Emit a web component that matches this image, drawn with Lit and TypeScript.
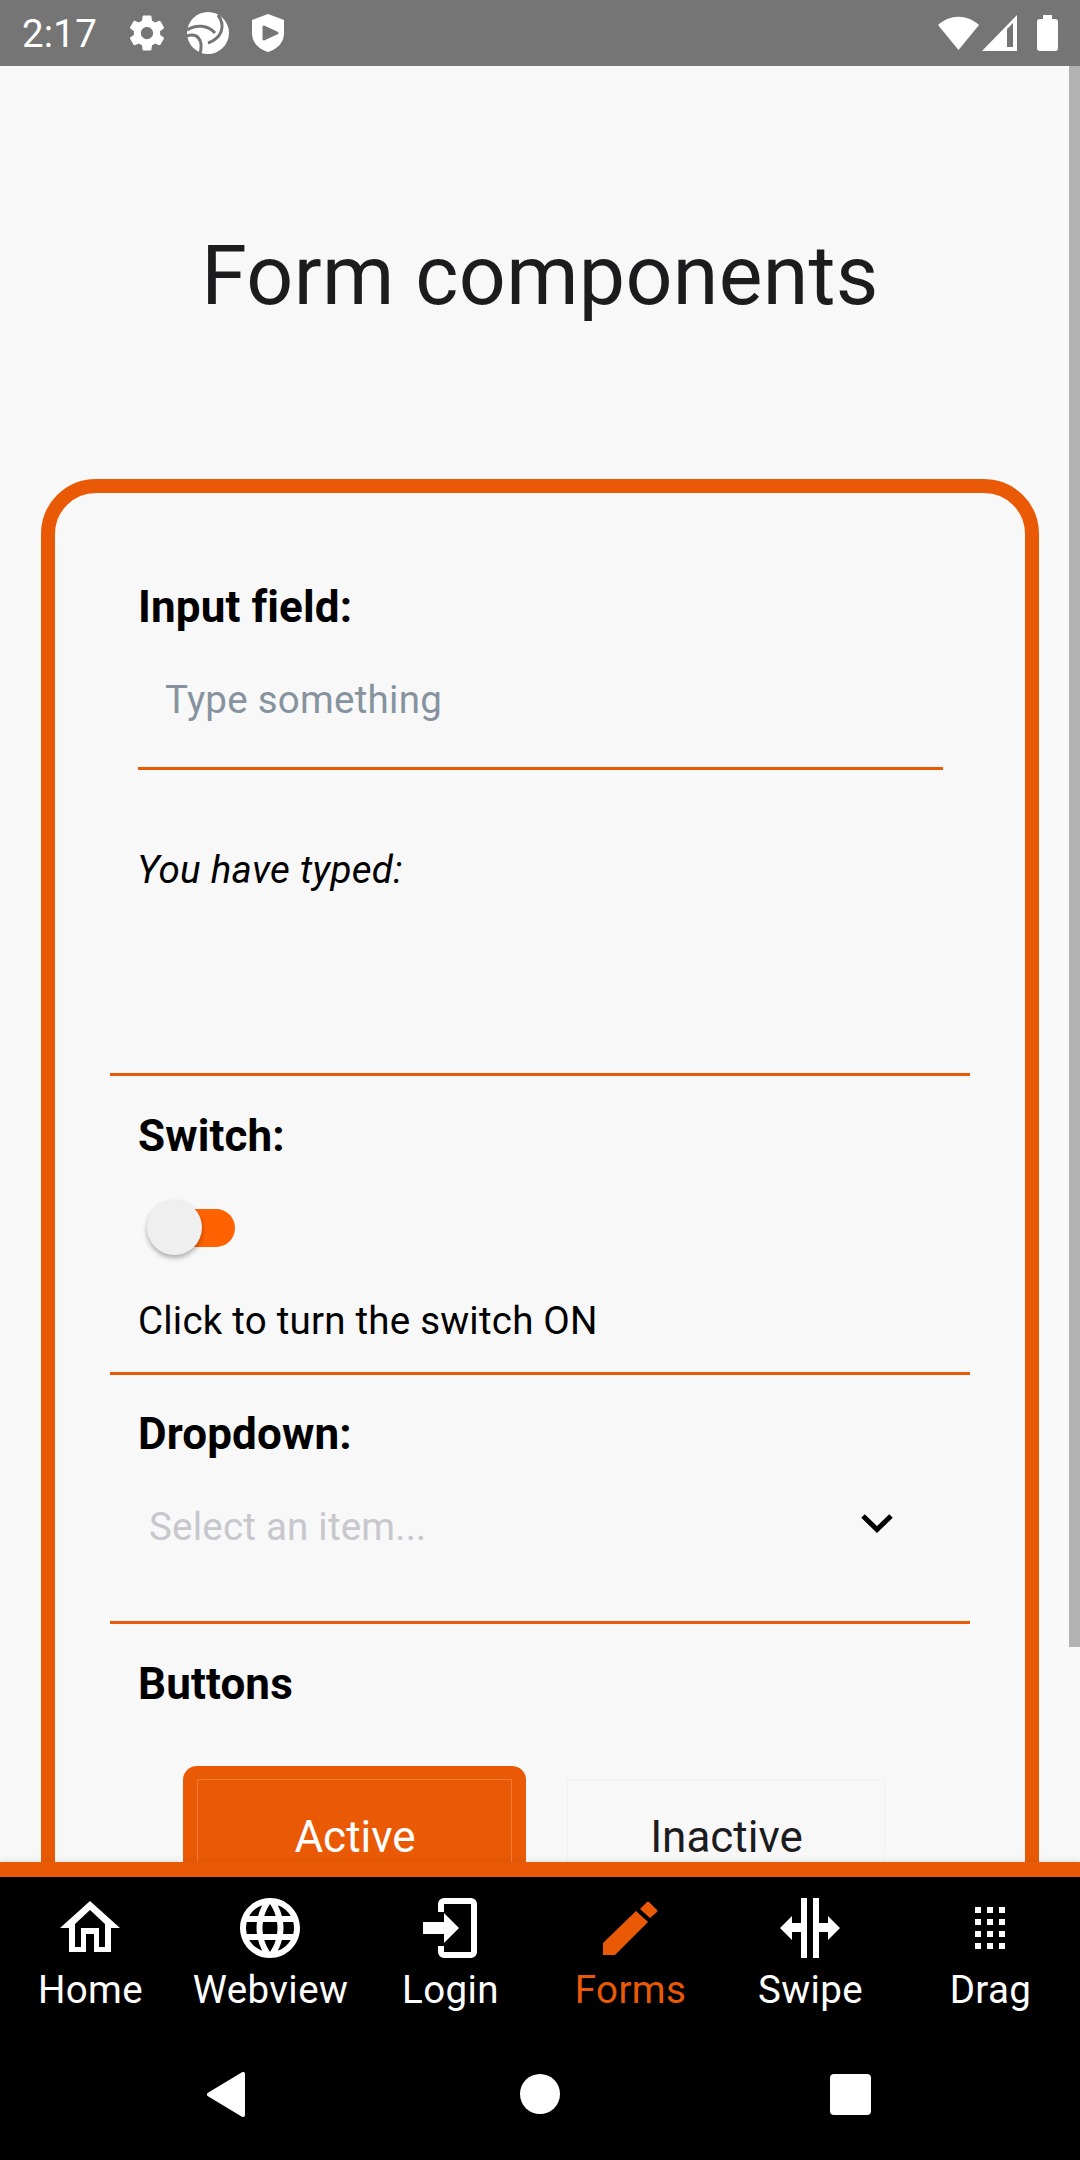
import { LitElement, html, css, svg, unsafeCSS } from 'lit';
import { customElement } from 'lit/decorators.js';

const ORANGE = unsafeCSS('#ea5a06');

const tabs = [
  {
    label: 'Home',
    icon: svg`<path fill-rule="evenodd" d="M33 6L63 33H54V57H37V39H29V57H12V33H3ZM33 15L48 29V52H42V33H24V52H18V29Z"/>`,
  },
  {
    label: 'Webview',
    icon: svg`<path transform="translate(-3 -3) scale(3)" d="M11.99 2C6.47 2 2 6.48 2 12s4.47 10 9.99 10C17.52 22 22 17.52 22 12S17.52 2 11.99 2zm6.93 6h-2.95c-.32-1.25-.78-2.45-1.38-3.56 1.84.63 3.37 1.91 4.33 3.56zM12 4.04c.83 1.2 1.48 2.53 1.91 3.96h-3.82c.43-1.43 1.08-2.76 1.91-3.96zM4.26 14C4.1 13.36 4 12.69 4 12s.1-1.36.26-2h3.38c-.08.66-.14 1.32-.14 2 0 .68.06 1.34.14 2H4.26zm.82 2h2.95c.32 1.25.78 2.45 1.38 3.56-1.84-.63-3.37-1.9-4.33-3.56zm2.95-8H5.08c.96-1.66 2.49-2.93 4.33-3.56C8.81 5.55 8.35 6.75 8.03 8zM12 19.96c-.83-1.2-1.48-2.53-1.91-3.96h3.82c-.43 1.43-1.08 2.76-1.91 3.96zM14.34 14H9.66c-.09-.66-.16-1.32-.16-2 0-.68.07-1.35.16-2h4.68c.09.65.16 1.32.16 2 0 .68-.07 1.34-.16 2zm.25 5.56c.6-1.11 1.06-2.31 1.38-3.56h2.95c-.96 1.65-2.49 2.93-4.33 3.56zM16.36 14c.08-.66.14-1.32.14-2 0-.68-.06-1.34-.14-2h3.38c.16.64.26 1.31.26 2s-.1 1.36-.26 2h-3.38z"/>`,
  },
  {
    label: 'Login',
    icon: svg`<path d="M6 27H27V18L42 33L27 48V39H6Z"/><path fill="none" stroke="currentColor" stroke-width="6" d="M24 17V9a3 3 0 0 1 3-3H54a3 3 0 0 1 3 3V57a3 3 0 0 1-3 3H27a3 3 0 0 1-3-3V51"/>`,
  },
  {
    label: 'Forms',
    active: true,
    icon: svg`<path d="M6 60V48L39 16L51 27L18 60Z"/><path d="M43 14L50 7Q51 6 52 7L60 15Q61 16 60 17L53 23Z"/>`,
  },
  {
    label: 'Swipe',
    icon: svg`<path d="M24 3H30V63H24ZM36 3H42V63H36ZM3 33L15 21V28H24V37H15V45ZM63 33L51 21V28H42V37H51V45Z"/>`,
  },
  {
    label: 'Drag',
    icon: svg`<path d="M18 12h6v6h-6zM30 12h6v6h-6zM42 12h6v6h-6zM18 24h6v6h-6zM30 24h6v6h-6zM42 24h6v6h-6zM18 36h6v6h-6zM30 36h6v6h-6zM42 36h6v6h-6zM18 48h6v6h-6zM30 48h6v6h-6zM42 48h6v6h-6z"/>`,
  },
];

@customElement('app-root')
export class AppRoot extends LitElement {
  static styles = css`
    :host {
      display: flex;
      flex-direction: column;
      width: 1080px;
      height: 2160px;
      overflow: hidden;
      font-family: Roboto, sans-serif;
      color: #000;
    }

    /* status bar */
    .status {
      flex: none;
      display: flex;
      align-items: center;
      height: 66px;
      padding-left: 22px;
      background: #757575;
      color: #fff;
      font-size: 38.5px;
      letter-spacing: 0.2px;
    }
    .status svg {
      display: block;
      flex: none;
      fill: #fff;
    }
    .time {
      width: 104px;
    }
    .gear {
      margin-right: 18px;
    }
    .swirl {
      margin-right: 20px;
    }
    .wifi {
      margin-left: auto;
      margin-right: 2px;
    }
    .signal {
      margin-right: 20px;
    }
    .battery {
      margin-right: 22px;
    }

    /* scrolling content */
    .main {
      flex: 1;
      min-height: 0;
      position: relative;
      overflow: hidden;
      background: #f8f8f8;
    }
    .scrollbar {
      position: absolute;
      top: 0;
      right: 0;
      width: 11px;
      height: 1581px;
      background: #b2b2b2;
    }
    h1 {
      margin: 162px 0 155px;
      font-size: 82.5px;
      font-weight: 400;
      line-height: 96px;
      letter-spacing: 0.3px;
      text-align: center;
      color: #1c1c1e;
    }
    .card {
      margin: 0 41px;
      padding: 0 55px 120px;
      border: 14px solid ${ORANGE};
      border-radius: 55px;
      font-size: 38.5px;
      line-height: 52px;
      letter-spacing: 0.22px;
    }
    .section {
      padding: 0 28px;
      border-bottom: 3px solid ${ORANGE};
    }
    .section.last {
      border-bottom: none;
    }
    .label {
      font-size: 44px;
      font-weight: 700;
      letter-spacing: 0.12px;
    }
    .input-sec {
      padding-top: 88px;
      padding-bottom: 177px;
    }
    input {
      display: block;
      box-sizing: border-box;
      width: 805px;
      height: 137px;
      margin: 0;
      padding: 0 0 1px 27px;
      border: none;
      border-bottom: 3px solid ${ORANGE};
      outline: none;
      background: transparent;
      font: 400 38.5px Roboto, sans-serif;
      letter-spacing: 0.26px;
    }
    input::placeholder {
      color: #86939e;
      opacity: 1;
    }
    .typed {
      margin: 74px 0 0 -1px;
      font-style: italic;
      letter-spacing: 0.3px;
    }
    .switch-sec {
      padding-top: 34px;
      padding-bottom: 25px;
    }
    .switch {
      position: relative;
      width: 88px;
      height: 56px;
      margin: 38px 0 39px 9px;
    }
    .track {
      position: relative;
      top: 9px;
      width: 75px;
      height: 38px;
      margin-left: 13px;
      border-radius: 19px;
      background: #ff6200;
    }
    .thumb {
      position: absolute;
      top: 0;
      left: 0;
      width: 55px;
      height: 55px;
      border-radius: 50%;
      background: #efefef;
      box-shadow: 0 3px 5px rgba(0, 0, 0, 0.3);
    }
    .drop-sec {
      padding-top: 33px;
      padding-bottom: 68px;
    }
    .select {
      display: flex;
      align-items: center;
      justify-content: space-between;
      margin-top: 41px;
      padding: 0 49px 0 11px;
      color: #c7c7cd;
    }
    .select svg {
      display: block;
      margin-top: -9px;
    }
    .btn-sec {
      padding-top: 34px;
    }
    .buttons {
      display: flex;
      gap: 27px;
      margin: 56px 0 0 45px;
    }
    .btn {
      box-sizing: border-box;
      width: 343px;
      padding: 13px 14px;
      border-radius: 14px;
      text-align: center;
      font-size: 44px;
      line-height: 44px;
      letter-spacing: 0;
    }
    .btn span {
      display: block;
      padding: 35px 0 50px 1px;
      border: 1px solid transparent;
    }
    .btn.on {
      background: ${ORANGE};
      color: #fff;
    }
    .btn.on span {
      border-color: #f27a33;
    }
    .btn.off {
      width: 346px;
      color: #1c1c1e;
    }
    .btn.off span {
      border-color: #f6eeee;
    }

    /* bottom tabs */
    .tabs {
      flex: none;
      position: relative;
      display: flex;
      height: 157px;
      border-top: 15px solid ${ORANGE};
      background: #000;
      box-shadow: 0 -3px 6px rgba(0, 0, 0, 0.05);
    }
    .tab {
      flex: 1;
      display: flex;
      flex-direction: column;
      align-items: center;
      padding-top: 18px;
      color: #fff;
      font-size: 38.5px;
      line-height: 40px;
      letter-spacing: 0.4px;
    }
    .tab.active {
      color: ${ORANGE};
    }
    .tab svg {
      display: block;
      margin-bottom: 9px;
      fill: currentColor;
    }
    .tab span {
      padding-left: 1px;
    }

    /* android nav */
    .nav {
      flex: none;
      display: flex;
      align-items: center;
      box-sizing: border-box;
      height: 126px;
      padding: 0 0 6px 207px;
      background: #000;
    }
    .nav svg {
      display: block;
      fill: #fff;
    }
    .back {
      margin-right: 275px;
    }
    .home {
      margin-right: 270px;
    }
  `;

  render() {
    return html`
      <div class="status">
        <span class="time">2:17</span>
        <svg class="gear" width="42" height="42" viewBox="0 0 24 24"><path d="M19.43 12.98c.04-.32.07-.64.07-.98s-.03-.66-.07-.98l2.11-1.65c.19-.15.24-.42.12-.64l-2-3.46c-.12-.22-.39-.3-.61-.22l-2.49 1c-.52-.4-1.08-.73-1.69-.98l-.38-2.65C14.46 2.18 14.25 2 14 2h-4c-.25 0-.46.18-.49.42l-.38 2.65c-.61.25-1.17.59-1.69.98l-2.49-1c-.23-.09-.49 0-.61.22l-2 3.46c-.13.22-.07.49.12.64l2.11 1.65c-.04.32-.07.65-.07.98s.03.66.07.98l-2.11 1.65c-.19.15-.24.42-.12.64l2 3.46c.12.22.39.3.61.22l2.49-1c.52.4 1.08.73 1.69.98l.38 2.65c.03.24.24.42.49.42h4c.25 0 .46-.18.49-.42l.38-2.65c.61-.25 1.17-.59 1.69-.98l2.49 1c.23.09.49 0 .61-.22l2-3.46c.12-.22.07-.49-.12-.64l-2.11-1.65zM12 15.5c-1.93 0-3.5-1.57-3.5-3.5s1.57-3.5 3.5-3.5 3.5 1.57 3.5 3.5-1.57 3.5-3.5 3.5z"/></svg>
        <svg class="swirl" width="44" height="44" viewBox="0 0 44 44">
          <circle cx="22" cy="22" r="21"/>
          <path fill="none" stroke="#757575" stroke-width="3" d="M32 4C40 15 36 27 22 32M1 19C10 13 22 14 29 22M1 25C10 22 18 27 14 43"/>
        </svg>
        <svg width="36" height="40" viewBox="0 0 36 40">
          <path d="M18 1L34 7V20C34 30 27 36 18 39C9 36 2 30 2 20V7Z"/>
          <path fill="#757575" stroke="#757575" stroke-width="3" stroke-linejoin="round" d="M14 14V26L27 20Z"/>
        </svg>
        <svg class="wifi" width="43" height="36" viewBox="0 0 43 36"><path d="M1 10C13 -1 30 -1 42 10L21.5 35Z"/></svg>
        <svg class="signal" width="35" height="36" viewBox="0 0 35 36"><path fill-rule="evenodd" d="M35 0V36H0ZM25 14V32H31V8Z"/></svg>
        <svg class="battery" width="21" height="36" viewBox="0 0 21 36"><path d="M6 0H15V4H18Q21 4 21 7V33Q21 36 18 36H3Q0 36 0 33V7Q0 4 3 4H6Z"/></svg>
      </div>

      <div class="main">
        <h1>Form components</h1>
        <div class="card">
          <div class="section input-sec">
            <div class="label">Input field:</div>
            <input placeholder="Type something" />
            <div class="typed">You have typed:</div>
          </div>
          <div class="section switch-sec">
            <div class="label">Switch:</div>
            <div class="switch"><div class="track"></div><div class="thumb"></div></div>
            <div>Click to turn the switch ON</div>
          </div>
          <div class="section drop-sec">
            <div class="label">Dropdown:</div>
            <div class="select">
              <span>Select an item...</span>
              <svg width="32" height="20" viewBox="0 0 32 20"><path fill="none" stroke="#000" stroke-width="5" d="M2 3L16 16.5L30 3"/></svg>
            </div>
          </div>
          <div class="section last btn-sec">
            <div class="label">Buttons</div>
            <div class="buttons">
              <div class="btn on"><span>Active</span></div>
              <div class="btn off"><span>Inactive</span></div>
            </div>
          </div>
        </div>
        <div class="scrollbar"></div>
      </div>

      <div class="tabs">
        ${tabs.map(
          (t) => html`
            <div class="tab ${t.active ? 'active' : ''}">
              <svg width="66" height="66" viewBox="0 0 66 66">${t.icon}</svg>
              <span>${t.label}</span>
            </div>
          `
        )}
      </div>

      <div class="nav">
        <svg class="back" width="38" height="45" viewBox="0 0 38 45"><path stroke="#fff" stroke-width="4" stroke-linejoin="round" d="M36 2V43L2 22.5Z"/></svg>
        <svg class="home" width="40" height="40" viewBox="0 0 40 40"><circle cx="20" cy="20" r="20"/></svg>
        <svg width="41" height="41" viewBox="0 0 41 41"><rect width="41" height="41" rx="4"/></svg>
      </div>
    `;
  }
}
